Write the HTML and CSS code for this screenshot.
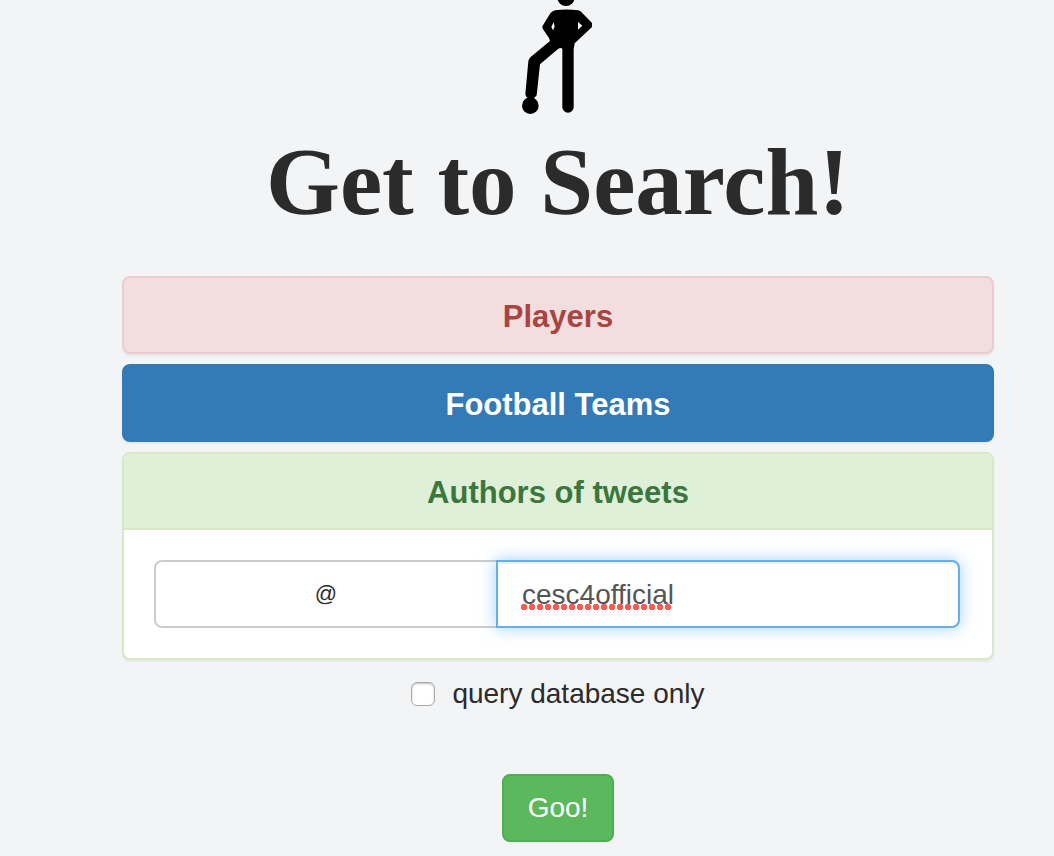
FILE: index.html
```html
<!DOCTYPE html>
<html lang="en">
<head>
<meta charset="utf-8">
<title>Get to Search!</title>
<link rel="stylesheet" href="styles.css">
</head>
<body>
<main class="page">
  <svg class="logo" viewBox="66 0 210 348" aria-hidden="true">
    <circle cx="198" cy="-8" r="26"/>
    <path fill-rule="evenodd" d="M165 31Q198 26 235 31Q243 33 249 41L277 70V80L224 130L221 148V321A17 17 0 0 1 187 321V146Q182 142 174 147L120 193L110 286Q103 297 92 297Q77 294 76 282L85 184Q86 177 92 171L150 123L147 114L128 86Q126 81 129 76L150 41Q156 33 165 31ZM161 66L154 81L159 91L164 80ZM234 65V89L247 77Z"/>
    <circle cx="91" cy="317" r="25"/>
  </svg>
  <h1 class="title">Get to Search!</h1>
  <form class="search">
    <section class="panel panel-danger"><h2 class="panel-heading">Players</h2></section>
    <section class="panel panel-primary"><h2 class="panel-heading">Football Teams</h2></section>
    <section class="panel panel-success">
      <h2 class="panel-heading">Authors of tweets</h2>
      <div class="panel-body">
        <label class="addon" for="author">@</label>
        <div class="field">
          <input class="field-input" id="author" type="text" value="cesc4official" spellcheck="false">
          <span class="misspelling"></span>
        </div>
      </div>
    </section>
    <label class="option"><input class="checkbox" type="checkbox">query database only</label>
    <button class="submit" type="button">Goo!</button>
  </form>
</main>
</body>
</html>
```
FILE: styles.css
```css
* {
  box-sizing: border-box;
}

body {
  margin: 0;
  background: #f3f4f6;
  color: #2b2b2b;
  font-family: "Liberation Sans", Arial, sans-serif;
  font-size: 28px;
}

.page {
  display: flex;
  flex-direction: column;
  align-items: center;
  padding: 0 60px 14px 122px;
}

.logo {
  width: 70px;
  height: 116px;
  margin-right: 2px;
}

.title {
  margin: 16px 0 44px;
  font-family: "Liberation Serif", "Times New Roman", serif;
  font-size: 95px;
  line-height: 100px;
  font-weight: bold;
}

.search {
  display: flex;
  flex-direction: column;
  align-items: center;
  align-self: stretch;
}

.panel {
  align-self: stretch;
  margin-bottom: 10px;
  border: 2px solid;
  border-radius: 8px;
  background: #fff;
  box-shadow: 0 2px 2px rgba(0, 0, 0, 0.05);
}

.panel-heading {
  margin: 0;
  padding: 21px 30px 17px;
  font-size: 31px;
  line-height: 36px;
  font-weight: bold;
  text-align: center;
}

.panel-danger {
  border-color: #ebccd1;
  background: #f2dede;
  color: #a94442;
}

.panel-primary {
  border-color: #337ab7;
  background: #337ab7;
  color: #fff;
}

.panel-success {
  border-color: #d6e9c6;
}

.panel-success .panel-heading {
  border-bottom: 2px solid #d6e9c6;
  border-radius: 6px 6px 0 0;
  background: #dff0d8;
  color: #3c763d;
}

.panel-body {
  display: grid;
  grid-template-columns: 342fr 464fr;
  padding: 30px 32px 30px 30px;
}

.addon {
  display: flex;
  align-items: center;
  justify-content: center;
  border: 2px solid #ccc;
  border-right: 0;
  border-radius: 8px 0 0 8px;
  font-size: 22px;
}

.field {
  position: relative;
}

.field-input {
  display: block;
  width: 100%;
  height: 68px;
  padding: 14px 24px 12px;
  border: 2px solid #66afe9;
  border-radius: 0 8px 8px 0;
  outline: 0;
  background: #fff;
  box-shadow: inset 0 2px 2px rgba(0, 0, 0, 0.075), 0 0 16px rgba(102, 175, 233, 0.6);
  color: #555;
  font: inherit;
}

.misspelling {
  position: absolute;
  left: 25px;
  top: 44px;
  width: 152px;
  height: 6px;
  background: radial-gradient(circle at 3px 3px, #fa5a52 3px, transparent 3px) 0 0 / 8px 6px repeat-x;
}

.option {
  display: flex;
  align-items: center;
  gap: 17px;
  margin-top: 8px;
  line-height: 32px;
}

.checkbox {
  appearance: none;
  width: 24px;
  height: 24px;
  margin: 0;
  border: 1px solid #aaa;
  border-radius: 6px;
  background: #fff;
  box-shadow: inset 0 1px 2px rgba(0, 0, 0, 0.25);
}

.submit {
  height: 68px;
  margin-top: 64px;
  padding: 0 24px;
  border: 2px solid #4cae4c;
  border-radius: 8px;
  background: #5cb85c;
  color: #fff;
  font: inherit;
}
```
